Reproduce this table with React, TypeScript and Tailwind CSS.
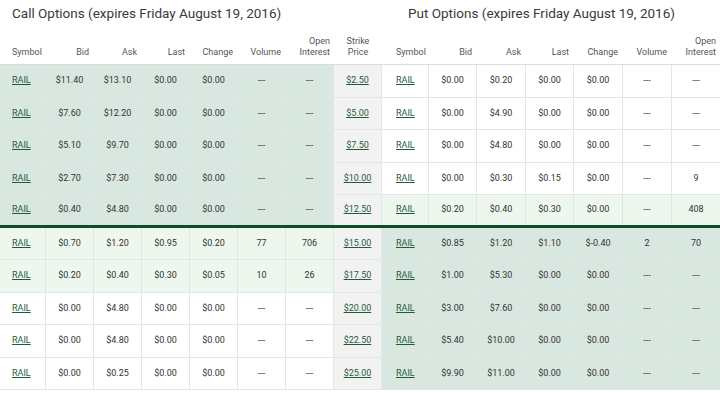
import React from "react";

type Row = {
  call: string[];
  strike: string;
  put: string[];
  callBg: string;
  putBg: string;
};

const GREEN = "bg-[#d8e8e0]";
const LIGHT = "bg-[#eef7ee]";
const WHITE = "bg-white";

const rows: Row[] = [
  { call: ["$11.40", "$13.10", "$0.00", "$0.00", "---", "---"], strike: "$2.50", put: ["$0.00", "$0.20", "$0.00", "$0.00", "---", "---"], callBg: GREEN, putBg: WHITE },
  { call: ["$7.60", "$12.20", "$0.00", "$0.00", "---", "---"], strike: "$5.00", put: ["$0.00", "$4.90", "$0.00", "$0.00", "---", "---"], callBg: GREEN, putBg: WHITE },
  { call: ["$5.10", "$9.70", "$0.00", "$0.00", "---", "---"], strike: "$7.50", put: ["$0.00", "$4.80", "$0.00", "$0.00", "---", "---"], callBg: GREEN, putBg: WHITE },
  { call: ["$2.70", "$7.30", "$0.00", "$0.00", "---", "---"], strike: "$10.00", put: ["$0.00", "$0.30", "$0.15", "$0.00", "---", "9"], callBg: GREEN, putBg: WHITE },
  { call: ["$0.40", "$4.80", "$0.00", "$0.00", "---", "---"], strike: "$12.50", put: ["$0.20", "$0.40", "$0.30", "$0.00", "---", "408"], callBg: GREEN, putBg: LIGHT },
  { call: ["$0.70", "$1.20", "$0.95", "$0.20", "77", "706"], strike: "$15.00", put: ["$0.85", "$1.20", "$1.10", "$-0.40", "2", "70"], callBg: LIGHT, putBg: GREEN },
  { call: ["$0.20", "$0.40", "$0.30", "$0.05", "10", "26"], strike: "$17.50", put: ["$1.00", "$5.30", "$0.00", "$0.00", "---", "---"], callBg: LIGHT, putBg: GREEN },
  { call: ["$0.00", "$4.80", "$0.00", "$0.00", "---", "---"], strike: "$20.00", put: ["$3.00", "$7.60", "$0.00", "$0.00", "---", "---"], callBg: WHITE, putBg: GREEN },
  { call: ["$0.00", "$4.80", "$0.00", "$0.00", "---", "---"], strike: "$22.50", put: ["$5.40", "$10.00", "$0.00", "$0.00", "---", "---"], callBg: WHITE, putBg: GREEN },
  { call: ["$0.00", "$0.25", "$0.00", "$0.00", "---", "---"], strike: "$25.00", put: ["$9.90", "$11.00", "$0.00", "$0.00", "---", "---"], callBg: WHITE, putBg: GREEN },
];

const cols =
  "grid grid-cols-[46px_48px_48px_48px_48px_48px_48px_48px_47px_48px_49px_48px_49px_49px_48px]";

const numHeads = ["Bid", "Ask", "Last", "Change", "Volume"];

const HeadSide: React.FC<{ put?: boolean }> = ({ put }) => (
  <>
    <div className={`self-end ${put ? "pl-[14px]" : "pl-3"}`}>Symbol</div>
    {numHeads.map((h) => (
      <div key={h} className="self-end text-right pr-[5px]">
        {h}
      </div>
    ))}
    <div className="self-end text-right pr-[4px]">
      Open
      <br />
      Interest
    </div>
  </>
);

const Cells: React.FC<{ values: string[]; bg: string; put?: boolean; last?: boolean }> = ({ values, bg, put, last }) => (
  <>
    <div className={`${bg} flex items-center border-r border-[#e2e7e4] ${put ? "pl-[14px]" : "pl-3"}`}>
      <a href="#" className="text-[#1f5c3c] underline underline-offset-1">
        RAIL
      </a>
    </div>
    {values.map((v, i) => (
      <div
        key={i}
        className={`${bg} flex items-center justify-center ${last && i === values.length - 1 ? "" : "border-r border-[#e2e7e4]"}`}
      >
        {v}
      </div>
    ))}
  </>
);

export default function App() {
  return (
    <div className="w-[720px] h-[393px] bg-white overflow-hidden font-['Roboto',sans-serif] text-[#333]">
      <div className="flex h-[30px] text-[13.5px] leading-4 text-[#3a3a3a] pt-[5px]">
        <div className="w-[360px] pl-3">Call Options (expires Friday August 19, 2016)</div>
        <div className="pl-[48px]">Put Options (expires Friday August 19, 2016)</div>
      </div>

      <div className={`${cols} h-[35px] border-b border-[#dcdcdc] text-[9px] leading-[11px] text-[#555] pb-[6px]`}>
        <HeadSide />
        <div className="self-end text-center">
          Strike
          <br />
          Price
        </div>
        <HeadSide put />
      </div>

      {rows.map((r, idx) => (
        <div
          key={r.strike}
          className={`${cols} h-[32.5px] text-[9px] ${idx === 4 ? "border-b-[3px] border-[#0f4a2b]" : "border-b border-[#e2e7e4]"}`}
        >
          <Cells values={r.call} bg={r.callBg} />
          <div className="bg-[#f2f2f2] flex items-center justify-center border-r border-[#e2e7e4]">
            <a href="#" className="text-[#1f5c3c] underline underline-offset-1">
              {r.strike}
            </a>
          </div>
          <Cells values={r.put} bg={r.putBg} put last />
        </div>
      ))}
    </div>
  );
}
